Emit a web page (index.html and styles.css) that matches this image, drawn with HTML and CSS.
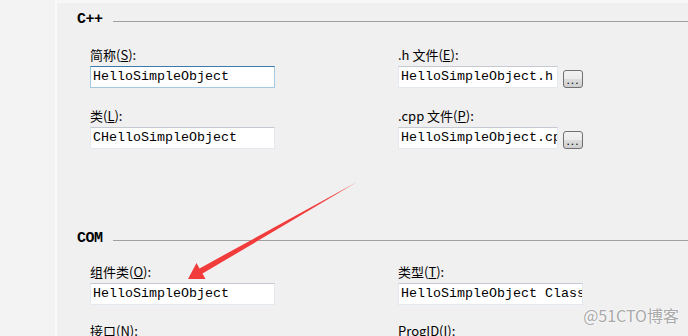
FILE: index.html
```html
<!DOCTYPE html>
<html lang="zh-CN">
<head>
    <meta charset="UTF-8">
    <title>ATL 简单对象向导 - 名称</title>
    <link rel="stylesheet" href="styles.css">
</head>
<body>
    <div class="sidebar"></div>

    <div class="main">
        <!-- C++ -->
        <div class="section-head">
            <span class="section-title">C++</span>
            <span class="section-rule"></span>
        </div>
        <div class="fields">
            <div class="field">
                <label>简称(<u>S</u>):</label>
                <div class="textbox focused">HelloSimpleObject</div>
            </div>
            <div class="field">
                <label>.h 文件(<u>E</u>):</label>
                <div class="with-browse">
                    <div class="textbox short">HelloSimpleObject.h</div>
                    <div class="browse">...</div>
                </div>
            </div>
            <div class="field">
                <label>类(<u>L</u>):</label>
                <div class="textbox">CHelloSimpleObject</div>
            </div>
            <div class="field">
                <label>.cpp 文件(<u>P</u>):</label>
                <div class="with-browse">
                    <div class="textbox short">HelloSimpleObject.cpp</div>
                    <div class="browse">...</div>
                </div>
            </div>
        </div>

        <!-- COM -->
        <div class="section-head com">
            <span class="section-title">COM</span>
            <span class="section-rule"></span>
        </div>
        <div class="fields com-fields">
            <div class="field">
                <label>组件类(<u>O</u>):</label>
                <div class="textbox">HelloSimpleObject</div>
            </div>
            <div class="field">
                <label>类型(<u>T</u>):</label>
                <div class="textbox">HelloSimpleObject Class</div>
            </div>
            <div class="field">
                <label>接口(<u>N</u>):</label>
            </div>
            <div class="field">
                <label>ProgID(<u>I</u>):</label>
            </div>
        </div>
    </div>

    <svg class="arrow" width="688" height="336" viewBox="0 0 688 336">
        <polygon points="188,279 196.5,263 199.5,268.4 357,182 202.5,273.6 205.5,279" fill="#f23b3b"/>
    </svg>

    <div class="watermark">@51CTO博客</div>
</body>
</html>
```

FILE: styles.css
```css
/* Page */
body {
    margin: 0;
    height: 336px;
    overflow: hidden;
    display: flex;
    background-color: #f0f0f0;
    color: #000;
    font-family: "Noto Sans CJK SC", sans-serif;
    font-size: 13px;
    position: relative;
}

.sidebar {
    width: 55px;
    background-color: #f3f3f3;
    border-right: 2px solid #fafafa;
}

.main {
    flex: 1;
    border-top: 3px solid #f7f7f7;
    padding-left: 20px;
}

/* Section headers */
.section-head {
    display: flex;
    align-items: center;
    height: 16px;
    margin-top: 8px;
}

.section-head.com {
    margin-top: 81px;
}

.section-title {
    width: 36px;
    font-family: "Liberation Mono", monospace;
    font-weight: bold;
    font-size: 15px;
    letter-spacing: -0.5px;
}

.section-rule {
    flex: 1;
    height: 1px;
    margin-top: 4px;
    background-color: #a0a0a0;
}

/* Fields */
.fields {
    display: grid;
    grid-template-columns: 308px auto;
    row-gap: 18px;
    margin-top: 18px;
    margin-left: 13px;
}

.com-fields {
    margin-top: 16px;
    row-gap: 16px;
}

.field label {
    display: block;
    height: 20px;
    line-height: 20px;
    margin-bottom: 1px;
    white-space: nowrap;
}

.field u {
    text-decoration-thickness: 1px;
    text-underline-offset: 1px;
}

.textbox {
    box-sizing: border-box;
    width: 185px;
    height: 22px;
    padding: 0 2px;
    background-color: #fff;
    border: 1px solid #e3e9ef;
    border-top-color: #c5cad2;
    font-family: "Liberation Mono", monospace;
    font-size: 13.33px;
    line-height: 20px;
    white-space: nowrap;
    overflow: hidden;
}

.textbox.focused {
    border-color: #a4c9e3;
    border-top-color: #3d7bad;
}

.textbox.short {
    width: 160px;
}

.with-browse {
    display: flex;
    align-items: flex-end;
    gap: 5px;
}

.browse {
    box-sizing: border-box;
    width: 20px;
    height: 18px;
    border: 1px solid #707070;
    border-radius: 3px;
    background: linear-gradient(#f2f2f2, #ebebeb 50%, #dddddd 51%, #cfcfcf);
    font-family: "Liberation Sans", sans-serif;
    font-size: 12px;
    line-height: 19px;
    text-align: center;
    letter-spacing: 1px;
}

/* Overlays */
.arrow {
    position: absolute;
    left: 0;
    top: 0;
}

.watermark {
    position: absolute;
    right: 9px;
    bottom: 9px;
    font-size: 16px;
    color: #a8a8a8;
    text-shadow: 0 0 2px #fff, 0 0 1px #fff;
}
```
